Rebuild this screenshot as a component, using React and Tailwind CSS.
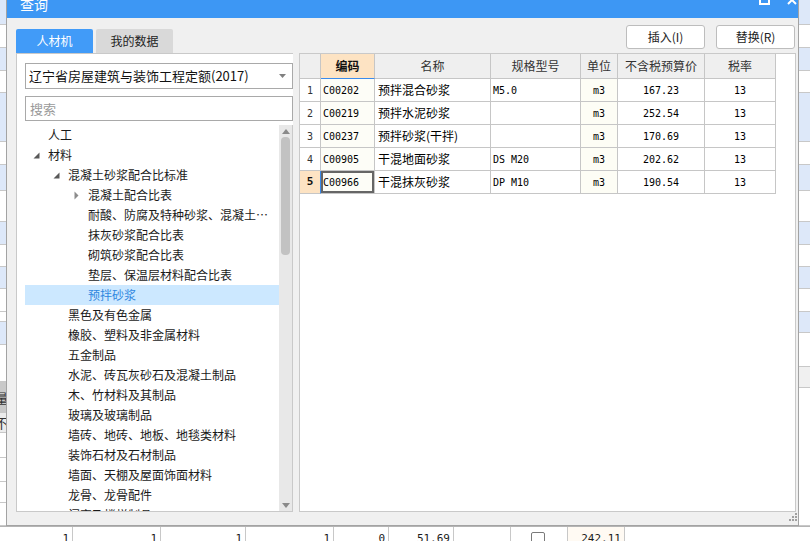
import React from 'react';

const rightSegs = [
  [25, 'bg-[#dde8f9]'], [23, 'bg-white'], [23, 'bg-[#dde8f9]'], [22, 'bg-white'],
  [49, 'bg-[#dde8f9]'], [23, 'bg-white'], [26, 'bg-[#dde8f9]'], [31, 'bg-white'],
  [23, 'bg-[#dde8f9]'], [22, 'bg-white'], [22, 'bg-[#dde8f9]'], [23, 'bg-white'],
  [21, 'bg-[#dde8f9]'], [34, 'bg-white'], [21, 'bg-[#f0f0f0]'], [138, 'bg-white'],
];

const leftSegs = [
  [25, 'bg-[#dde8f9]', ''], [23, 'bg-white', ''], [23, 'bg-[#dde8f9]', ''], [22, 'bg-white', ''],
  [49, 'bg-[#dde8f9]', ''], [23, 'bg-white', ''], [26, 'bg-[#dde8f9]', ''], [31, 'bg-white', ''],
  [23, 'bg-[#dde8f9]', ''], [22, 'bg-white', ''], [22, 'bg-[#dde8f9]', ''], [23, 'bg-white', ''],
  [10, 'bg-white', ''], [23, 'bg-[#dde8f9]', ''], [37, 'bg-white', ''], [31, 'bg-[#c9c9c9]', '量'],
  [20, 'bg-[#ececec]', '不'], [25, 'bg-white', ''], [24, 'bg-white', ''], [21, 'bg-white', ''], [23, 'bg-white', ''],
];

const bottomCells = [
  { w: 'w-[73px]', v: '1' },
  { w: 'w-[88px]', v: '1' },
  { w: 'w-[85px]', v: '1' },
  { w: 'w-[88px]', v: '1' },
  { w: 'w-[55px]', v: '0' },
  { w: 'w-[65px]', v: '51.69' },
  { w: 'w-[57px]', v: '' },
  { w: 'w-[57px]', v: '', cb: true },
  { w: 'w-[57px]', v: '242.11', cream: true },
];

const tree = [
  { t: '人工', l: 0 },
  { t: '材料', l: 0, a: 'down' },
  { t: '混凝土砂浆配合比标准', l: 1, a: 'down' },
  { t: '混凝土配合比表', l: 2, a: 'right' },
  { t: '耐酸、防腐及特种砂浆、混凝土配合比表', l: 2 },
  { t: '抹灰砂浆配合比表', l: 2 },
  { t: '砌筑砂浆配合比表', l: 2 },
  { t: '垫层、保温层材料配合比表', l: 2 },
  { t: '预拌砂浆', l: 2, sel: true },
  { t: '黑色及有色金属', l: 1 },
  { t: '橡胶、塑料及非金属材料', l: 1 },
  { t: '五金制品', l: 1 },
  { t: '水泥、砖瓦灰砂石及混凝土制品', l: 1 },
  { t: '木、竹材料及其制品', l: 1 },
  { t: '玻璃及玻璃制品', l: 1 },
  { t: '墙砖、地砖、地板、地毯类材料', l: 1 },
  { t: '装饰石材及石材制品', l: 1 },
  { t: '墙面、天棚及屋面饰面材料', l: 1 },
  { t: '龙骨、龙骨配件', l: 1 },
  { t: '门窗及楼梯制品', l: 1 },
];

const levelPad = { 0: 'pl-[6px]', 1: 'pl-[26px]', 2: 'pl-[46px]' };

const cols = [
  { w: 'w-[21px]', h: '' },
  { w: 'w-[54px]', h: '编码' },
  { w: 'w-[116px]', h: '名称' },
  { w: 'w-[90px]', h: '规格型号' },
  { w: 'w-[37px]', h: '单位' },
  { w: 'w-[87px]', h: '不含税预算价' },
  { w: 'w-[71px]', h: '税率' },
];

const rows = [
  ['1', 'C00202', '预拌混合砂浆', 'M5.0', 'm3', '167.23', '13'],
  ['2', 'C00219', '预拌水泥砂浆', '', 'm3', '252.54', '13'],
  ['3', 'C00237', '预拌砂浆(干拌)', '', 'm3', '170.69', '13'],
  ['4', 'C00905', '干混地面砂浆', 'DS M20', 'm3', '202.62', '13'],
  ['5', 'C00966', '干混抹灰砂浆', 'DP M10', 'm3', '190.54', '13'],
];

const mono = "font-['DejaVu_Sans_Mono','Liberation_Mono',monospace] text-[10px]";

function Arrow({ type }) {
  if (type === 'down')
    return (
      <svg width="7" height="7" viewBox="0 0 7 7">
        <polygon points="6.5,0.5 6.5,6.5 0.5,6.5" fill="#595959" />
      </svg>
    );
  if (type === 'right')
    return (
      <svg width="5" height="9" viewBox="0 0 5 9">
        <polygon points="0.5,0.5 4.5,4.5 0.5,8.5" fill="#8c8c8c" />
      </svg>
    );
  return null;
}

function Grid() {
  return (
    <div className="flex flex-col">
      <div className="flex h-[25px]">
        {cols.map((c, i) => (
          <div
            key={i}
            className={
              c.w +
              ' flex items-center justify-center border-r border-b text-[12px] ' +
              (i === 1
                ? 'bg-[#fde3c3] border-r-[#c6c6c6] border-b-[#3b8beb] font-bold text-[#111]'
                : 'bg-[#efefef] border-[#c6c6c6] text-[#333]')
            }
          >
            {c.h}
          </div>
        ))}
      </div>
      {rows.map((r, ri) => {
        const last = ri === 4;
        return (
          <div key={ri} className="flex h-[23px]">
            <div
              className={
                'w-[21px] flex items-center justify-center border-b border-r ' +
                (last
                  ? "bg-[#fde3c3] border-b-[#c6c6c6] border-r-[#3b8beb] font-bold text-[#111] font-['DejaVu_Sans_Mono',monospace] text-[11px]"
                  : "bg-white border-[#c6c6c6] text-[#333] font-['DejaVu_Sans_Mono',monospace] text-[10px]")
              }
            >
              {r[0]}
            </div>
            <div
              className={
                'w-[54px] flex items-center pl-[2px] border-b border-r border-[#c6c6c6] bg-[#fdfdf7] text-black ' +
                mono +
                (last ? ' shadow-[inset_0_0_0_2px_#666666]' : '')
              }
            >
              {r[1]}
            </div>
            <div className="w-[116px] flex items-center pl-[3px] border-b border-r border-[#c6c6c6] bg-white text-[12px] text-black">
              {r[2]}
            </div>
            <div className={'w-[90px] flex items-center pl-[2px] border-b border-r border-[#c6c6c6] bg-white text-black ' + mono}>
              {r[3]}
            </div>
            <div className={'w-[37px] flex items-center justify-center border-b border-r border-[#c6c6c6] bg-[#fdfdf5] text-black ' + mono}>
              {r[4]}
            </div>
            <div className={'w-[87px] flex items-center justify-center border-b border-r border-[#c6c6c6] bg-white text-black ' + mono}>
              {r[5]}
            </div>
            <div className={'w-[71px] flex items-center justify-center border-b border-r border-[#c6c6c6] bg-white text-black ' + mono}>
              {r[6]}
            </div>
          </div>
        );
      })}
    </div>
  );
}

export default function App() {
  return (
    <div className="relative w-[810px] h-[541px] overflow-hidden bg-white font-['Noto_Sans_CJK_SC','Noto_Sans',sans-serif] text-[#1a1a1a]">
      {/* background application */}
      <div className="flex flex-col h-full">
        <div className="flex h-[526px]">
          <div className="w-[6px] flex flex-col overflow-hidden">
            {leftSegs.map((s, i) => (
              <div
                key={i}
                style={{ height: s[0] }}
                className={s[1] + ' shrink-0 border-b border-[#c8c8c8] flex items-center overflow-hidden text-[13px] leading-none text-[#333]'}
              >
                {s[2] ? <span className="-ml-[5px]">{s[2]}</span> : null}
              </div>
            ))}
          </div>
          <div className="flex-1" />
          <div className="w-[12px] flex flex-col overflow-hidden">
            {rightSegs.map((s, i) => (
              <div key={i} style={{ height: s[0] }} className={s[1] + ' shrink-0 border-b border-[#c8c8c8]'} />
            ))}
          </div>
        </div>
        <div className="h-[15px] flex border-t border-[#b4b4b4]">
          {bottomCells.map((c, i) => (
            <div
              key={i}
              className={
                c.w +
                ' border-r border-[#c8c8c8] flex justify-end pr-[3px] pt-[5px] leading-[14px] ' +
                mono +
                (c.cream ? ' bg-[#fffaf3]' : ' bg-white')
              }
            >
              {c.cb ? (
                <div className="mx-auto mt-[0px] w-[14px] h-[14px] border border-[#7a7a7a] rounded-[2px] bg-white" />
              ) : (
                <span className="text-[11px]">{c.v}</span>
              )}
            </div>
          ))}
          <div className="flex-1 bg-white" />
        </div>
      </div>

      {/* dialog window */}
      <div className="absolute left-[6px] top-[-12px] w-[793px] h-[538px] border border-[#a3a3a3] bg-[#f0f0f0] flex flex-col">
        {/* title bar */}
        <div className="h-[29px] shrink-0 bg-[#3d97f4] flex items-center pl-[13px] pr-[1px] text-white">
          <span className="text-[14px] leading-none">查询</span>
          <div className="flex-1" />
          <div className="flex items-center gap-[17px] -mt-[8px]">
            <svg width="11" height="11" viewBox="0 0 11 11">
              <rect x="1" y="1" width="9" height="9" fill="none" stroke="white" strokeWidth="2" />
            </svg>
            <svg width="10" height="10" viewBox="0 0 10 10">
              <path d="M1 1 L9 9 M9 1 L1 9" stroke="white" strokeWidth="2" />
            </svg>
          </div>
        </div>

        {/* tabs + buttons */}
        <div className="h-[35px] shrink-0 flex items-start pl-[9px] pr-[3px]">
          <div className="flex gap-[3px] mt-[11px]">
            <div className="w-[77px] h-[24px] bg-[#419bf8] text-white rounded-t-[2px] flex items-center justify-center text-[12px]">
              人材机
            </div>
            <div className="w-[77px] h-[24px] bg-[#d9d9d9] text-[#222] rounded-t-[2px] flex items-center justify-center text-[12px]">
              我的数据
            </div>
          </div>
          <div className="flex-1" />
          <div className="flex gap-[11px] mt-[7px]">
            <div className="w-[79px] h-[24px] bg-white border border-[#bdbdbd] rounded-[3px] flex items-center justify-center text-[12px] text-[#222]">
              插入(I)
            </div>
            <div className="w-[79px] h-[24px] bg-white border border-[#bdbdbd] rounded-[3px] flex items-center justify-center text-[12px] text-[#222]">
              替换(R)
            </div>
          </div>
        </div>

        {/* panels */}
        <div className="h-[459px] shrink-0 flex pl-[9px] pr-[2px] gap-[6px]">
          {/* left panel */}
          <div className="w-[277px] bg-white border-l border-t border-b border-[#c9c9c9] flex flex-col pt-[9px] pl-[8px]">
            <div className="h-[26px] shrink-0 border border-[#a9a9a9] flex items-center pl-[3px] pr-[6px] text-[13px] text-[#111]">
              <span className="flex-1">辽宁省房屋建筑与装饰工程定额(2017)</span>
              <svg width="7" height="4" viewBox="0 0 7 4">
                <polygon points="0,0 7,0 3.5,4" fill="#808080" />
              </svg>
            </div>
            <div className="h-[25px] mt-[7px] shrink-0 border border-[#a9a9a9] flex items-center pl-[4px] text-[13px] text-[#9a9a9a]">
              搜索
            </div>
            <div className="mt-[4px] flex-1 min-h-0 flex border-r border-[#c9c9c9] overflow-hidden">
              <div className="flex-1 min-w-0 overflow-hidden">
                {tree.map((n, i) => (
                  <div
                    key={i}
                    className={
                      'h-[20px] flex items-center pr-[6px] text-[12px] ' +
                      levelPad[n.l] +
                      (n.sel ? ' bg-[#cce8ff] text-[#2f86e0]' : ' text-[#1a1a1a]')
                    }
                  >
                    <div className="w-[10px] h-[20px] shrink-0 flex items-center justify-center">
                      <Arrow type={n.a} />
                    </div>
                    <span className="ml-[7px] truncate">{n.t}</span>
                  </div>
                ))}
              </div>
              <div className="w-[13px] shrink-0 bg-[#e8e8e8] flex flex-col items-center">
                <div className="h-[12px] flex items-center justify-center">
                  <svg width="8" height="5" viewBox="0 0 8 5">
                    <polygon points="4,0 8,5 0,5" fill="#8a8a8a" />
                  </svg>
                </div>
                <div className="w-[9px] h-[118px] bg-[#c2c2c2] rounded-[4px]" />
                <div className="flex-1" />
                <div className="h-[12px] flex items-center justify-center">
                  <svg width="8" height="5" viewBox="0 0 8 5">
                    <polygon points="0,0 8,0 4,5" fill="#8a8a8a" />
                  </svg>
                </div>
              </div>
            </div>
          </div>

          {/* right panel */}
          <div className="flex-1 bg-white border border-[#c9c9c9] overflow-hidden">
            <Grid />
          </div>
        </div>

        {/* bottom with resize grip */}
        <div className="h-[13px] shrink-0 flex justify-end items-start pt-[1px] pr-[1px]">
          <svg width="8" height="8" viewBox="0 0 8 8">
            <rect x="6" y="0" width="2" height="2" fill="#a0a0a0" />
            <rect x="3" y="3" width="2" height="2" fill="#a0a0a0" />
            <rect x="6" y="3" width="2" height="2" fill="#a0a0a0" />
            <rect x="0" y="6" width="2" height="2" fill="#a0a0a0" />
            <rect x="3" y="6" width="2" height="2" fill="#a0a0a0" />
            <rect x="6" y="6" width="2" height="2" fill="#a0a0a0" />
          </svg>
        </div>
      </div>
    </div>
  );
}
